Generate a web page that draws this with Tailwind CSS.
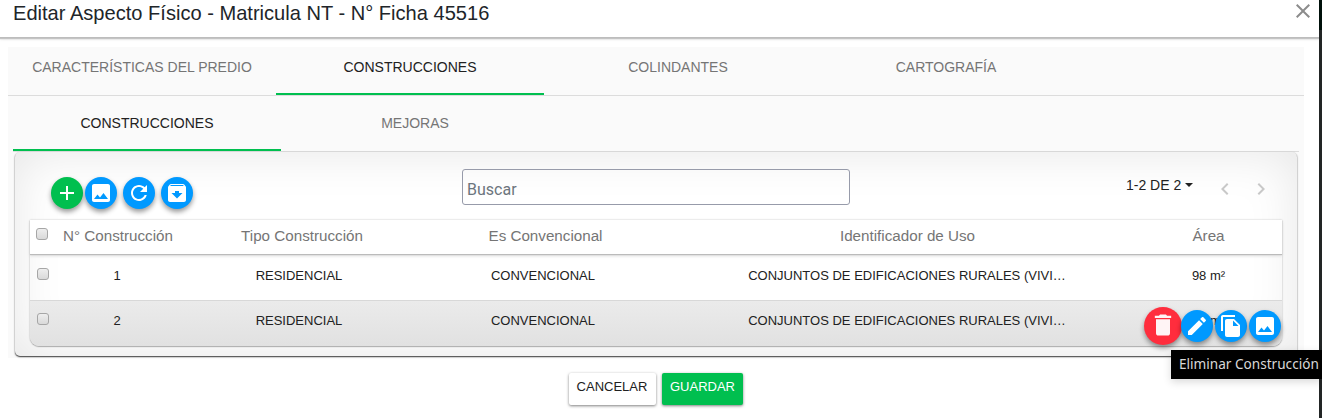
<!DOCTYPE html>
<html lang="es">
<head>
    <meta charset="UTF-8">
    <meta name="viewport" content="width=device-width, initial-scale=1.0">
    <title>Editar Aspecto Físico</title>
    <script src="https://cdn.jsdelivr.net/npm/@tailwindcss/browser@4"></script>
</head>
<body class="h-[418px] overflow-hidden bg-white font-['Liberation_Sans',Arial,sans-serif] text-[#212121]">
    <!-- Icons -->
    <svg class="hidden">
        <symbol id="add" viewBox="0 0 24 24"><path d="M19 13h-6v6h-2v-6H5v-2h6V5h2v6h6v2z"/></symbol>
        <symbol id="image" viewBox="0 0 24 24"><path d="M21 19V5c0-1.100-.9-2-2-2H5c-1.100 0-2 .9-2 2v14c0 1.100.9 2 2 2h14c1.100 0 2-.9 2-2zM8.500 13.500l2.500 3.010L14.500 12l4.500 6H5l3.500-4.500z"/></symbol>
        <symbol id="refresh" viewBox="0 0 24 24"><path d="M17.650 6.350C16.200 4.900 14.210 4 12 4c-4.420 0-7.990 3.580-7.990 8s3.570 8 7.990 8c3.730 0 6.840-2.550 7.730-6h-2.080c-.82 2.330-3.040 4-5.650 4-3.310 0-6-2.690-6-6s2.690-6 6-6c1.660 0 3.140.69 4.220 1.780L13 11h7V4l-2.350 2.350z"/></symbol>
        <symbol id="archive" viewBox="0 0 24 24"><path d="M20.540 5.230l-1.390-1.680C18.880 3.210 18.470 3 18 3H6c-.47 0-.88.210-1.160.550L3.460 5.230C3.170 5.570 3 6.020 3 6.500V19c0 1.100.9 2 2 2h14c1.100 0 2-.9 2-2V6.500c0-.48-.17-.93-.46-1.270zM12 17.500L6.500 12H10v-2h4v2h3.500L12 17.500zM5.120 5l.81-1h12l.94 1H5.120z"/></symbol>
        <symbol id="delete" viewBox="0 0 24 24"><path d="M6 19c0 1.100.9 2 2 2h8c1.100 0 2-.9 2-2V7H6v12zM19 4h-3.500l-1-1h-5l-1 1H5v2h14V4z"/></symbol>
        <symbol id="edit" viewBox="0 0 24 24"><path d="M3 17.250V21h3.750L17.810 9.940l-3.750-3.750L3 17.250zM20.710 7.040c.39-.39.39-1.020 0-1.410l-2.340-2.340c-.39-.39-1.020-.39-1.410 0l-1.830 1.830 3.750 3.750 1.830-1.830z"/></symbol>
        <symbol id="copy" viewBox="0 0 24 24"><path d="M16 1H4c-1.100 0-2 .9-2 2v14h2V3h12V1zm-1 4l6 6v10c0 1.100-.9 2-2 2H7.990C6.890 23 6 22.100 6 21l.01-14c0-1.100.89-2 1.990-2h7zm-1 7h5.500L14 6.500V12z"/></symbol>
        <symbol id="left" viewBox="0 0 24 24"><path d="M15.410 7.410L14 6l-6 6 6 6 1.410-1.410L10.830 12z"/></symbol>
        <symbol id="right" viewBox="0 0 24 24"><path d="M10 6L8.590 7.410 13.170 12l-4.580 4.590L10 18l6-6z"/></symbol>
        <symbol id="close" viewBox="0 0 24 24"><path d="M19 6.410L17.590 5 12 10.590 6.410 5 5 6.410 10.590 12 5 17.590 6.410 19 12 13.410 17.590 19 19 17.590 13.410 12z"/></symbol>
    </svg>

    <div class="flex h-full">
        <div class="w-[1319px] shrink-0">
            <!-- Header -->
            <header class="flex h-[37px] justify-between pl-[13px] pr-1 shadow-[0_1px_0_#bdbdbd,0_2px_1px_#c4c4c4,0_2px_3px_#ddd]">
                <h1 class="mt-px text-[20.08px] leading-6 text-[#212529]">Editar Aspecto Físico - Matricula NT - N° Ficha 45516</h1>
                <svg class="-mt-px size-6 fill-[#8c8c8c]"><use href="#close"/></svg>
            </header>

            <main class="ml-2 mt-[10px] h-[311px] w-[1296px] bg-[#fafafa]">
                <!-- Main tabs -->
                <nav class="flex h-[49px] border-b border-[#dcdcdc] text-center text-sm leading-10 text-[#757575]">
                    <div class="h-12 w-[268px]">CARACTERÍSTICAS DEL PREDIO</div>
                    <div class="h-12 w-[268px] border-b-2 border-[#00bf4f] text-[#212121]">CONSTRUCCIONES</div>
                    <div class="h-12 w-[268px]">COLINDANTES</div>
                    <div class="h-12 w-[268px]">CARTOGRAFÍA</div>
                </nav>

                <!-- Sub tabs -->
                <nav class="ml-[5px] flex h-14 w-[1286px] border-b border-[#dcdcdc] text-center text-sm leading-[54px] text-[#757575]">
                    <div class="h-[55px] w-[268px] border-b-2 border-[#00bf4f] text-[#212121]">CONSTRUCCIONES</div>
                    <div class="h-[55px] w-[268px]">MEJORAS</div>
                </nav>

                <section class="ml-[7px] flex h-[204px] w-[1282px] flex-col rounded-[5px] bg-white px-[15px] shadow-[inset_0_0_50px_rgba(0,0,0,0.1),0_1px_1px_#555,0_1px_2px_#999]">
                    <!-- Toolbar -->
                    <div class="flex h-[68px] shrink-0">
                        <div class="flex w-[432px] pl-[21px] pt-[25px]">
                            <button class="mr-[2px] flex size-8 items-center justify-center rounded-full bg-[#00bf4f] shadow-[0_3px_5px_rgba(0,0,0,0.4)]"><svg class="size-6 fill-white"><use href="#add"/></svg></button>
                            <button class="mr-[6px] flex size-8 items-center justify-center rounded-full bg-[#0099ff] shadow-[0_3px_5px_rgba(0,0,0,0.4)]"><svg class="size-6 fill-white"><use href="#image"/></svg></button>
                            <button class="mr-[6px] flex size-8 items-center justify-center rounded-full bg-[#0099ff] shadow-[0_3px_5px_rgba(0,0,0,0.4)]"><svg class="size-6 fill-white"><use href="#refresh"/></svg></button>
                            <button class="flex size-8 items-center justify-center rounded-full bg-[#0099ff] shadow-[0_3px_5px_rgba(0,0,0,0.4)]"><svg class="size-6 fill-white"><use href="#archive"/></svg></button>
                        </div>
                        <input type="text" placeholder="Buscar" class="mt-[17px] h-9 w-[388px] rounded-[3px] border border-[#979baa] px-1 pt-1 font-[Roboto,sans-serif] text-base placeholder:text-[#6c757d]">
                        <div class="ml-[276px] flex pt-[21px]">
                            <span class="w-[59px] whitespace-nowrap pt-[2px] text-sm leading-5">1-2 DE 2</span>
                            <span class="mt-[10px] h-0 border-x-4 border-t-4 border-x-transparent border-t-[#212121]"></span>
                            <svg class="ml-5 mt-[4px] size-6 fill-[#c8c8c8]"><use href="#left"/></svg>
                            <svg class="ml-3 mt-[4px] size-6 fill-[#c8c8c8]"><use href="#right"/></svg>
                        </div>
                    </div>

                    <!-- Table -->
                    <div class="h-[126px] w-[1252px] rounded-b-[9px] shadow-[0_0_2px_#bbb,0_1px_1px_#aaa]">
                        <div class="grid h-[34px] grid-cols-[26px_137px_218px_269px_455px_147px] bg-white text-center text-[15.2px] leading-8 text-[#757575] shadow-[0_1px_1px_#bbb,0_2px_3px_#ddd]">
                            <span class="ml-[6px] mt-2 size-3 rounded-[3px] border border-[#a6a6a6] bg-linear-to-b from-[#eee] to-[#d9d9d9]"></span>
                            <span class="pr-[13px] whitespace-nowrap">N° Construcción</span>
                            <span>Tipo Construcción</span>
                            <span>Es Convencional</span>
                            <span>Identificador de Uso</span>
                            <span>Área</span>
                        </div>
                        <div class="grid h-[46px] grid-cols-[26px_135px_216px_272px_456px_147px] text-center text-[13px] leading-[43px]">
                            <span class="ml-[7px] mt-[14px] size-3 rounded-[3px] border border-[#a6a6a6] bg-linear-to-b from-[#eee] to-[#d9d9d9]"></span>
                            <span class="pr-[13px]">1</span>
                            <span>RESIDENCIAL</span>
                            <span>CONVENCIONAL</span>
                            <span>CONJUNTOS DE EDIFICACIONES RURALES (VIVI…</span>
                            <span>98 m²</span>
                        </div>
                        <div class="relative grid h-[46px] grid-cols-[26px_135px_216px_272px_456px_147px] rounded-b-[9px] border-t border-[#d8d8d8] bg-linear-to-b from-[#ebebeb] to-[#e1e1e1] text-center text-[13px] leading-[40px]">
                            <span class="ml-[7px] mt-3 size-3 rounded-[3px] border border-[#a6a6a6] bg-linear-to-b from-[#eee] to-[#d9d9d9]"></span>
                            <span class="pr-[13px]">2</span>
                            <span>RESIDENCIAL</span>
                            <span>CONVENCIONAL</span>
                            <span>CONJUNTOS DE EDIFICACIONES RURALES (VIVI…</span>
                            <span>98 m²</span>
                            <!-- Row actions -->
                            <div class="absolute right-px top-[6px] flex items-center">
                                <button class="-mr-px flex size-[38px] items-center justify-center rounded-full bg-[#ff2d3d] shadow-[0_3px_5px_rgba(0,0,0,0.4)]"><svg class="-mt-[3px] size-7 fill-white/95"><use href="#delete"/></svg></button>
                                <button class="mr-[2px] flex size-8 items-center justify-center rounded-full bg-[#0099ff] shadow-[0_3px_5px_rgba(0,0,0,0.4)]"><svg class="size-6 fill-white"><use href="#edit"/></svg></button>
                                <button class="mr-[2px] flex size-8 items-center justify-center rounded-full bg-[#0099ff] shadow-[0_3px_5px_rgba(0,0,0,0.4)]"><svg class="size-6 fill-white"><use href="#copy"/></svg></button>
                                <button class="flex size-8 items-center justify-center rounded-full bg-[#0099ff] shadow-[0_3px_5px_rgba(0,0,0,0.4)]"><svg class="size-6 fill-white"><use href="#image"/></svg></button>
                            </div>
                        </div>
                    </div>
                </section>
            </main>

            <!-- Footer -->
            <footer class="ml-[569px] mt-[15px] flex gap-[6px] text-[13px] leading-[27px]">
                <button class="flex h-8 w-[87px] justify-center rounded-[2px] bg-white pr-px shadow-[0_1px_3px_rgba(0,0,0,0.5)]">CANCELAR</button>
                <button class="flex h-8 w-[81px] justify-center rounded-[2px] bg-[#00bf4f] text-white shadow-[0_1px_3px_rgba(0,0,0,0.5)]">GUARDAR</button>
            </footer>
        </div>
        <div class="w-[3px] border-t-[30px] border-[#00100a] bg-[#222525]"></div>
    </div>

    <!-- Tooltip -->
    <div class="absolute left-[1171px] top-[350px] h-[29px] w-[151px] whitespace-nowrap bg-black pl-2 font-['Noto_Sans',sans-serif] text-[13.6px] leading-7 text-[#d8d8d8] shadow-[0_3px_8px_rgba(0,0,0,0.15)]">Eliminar Construcción</div>
</body>
</html>
